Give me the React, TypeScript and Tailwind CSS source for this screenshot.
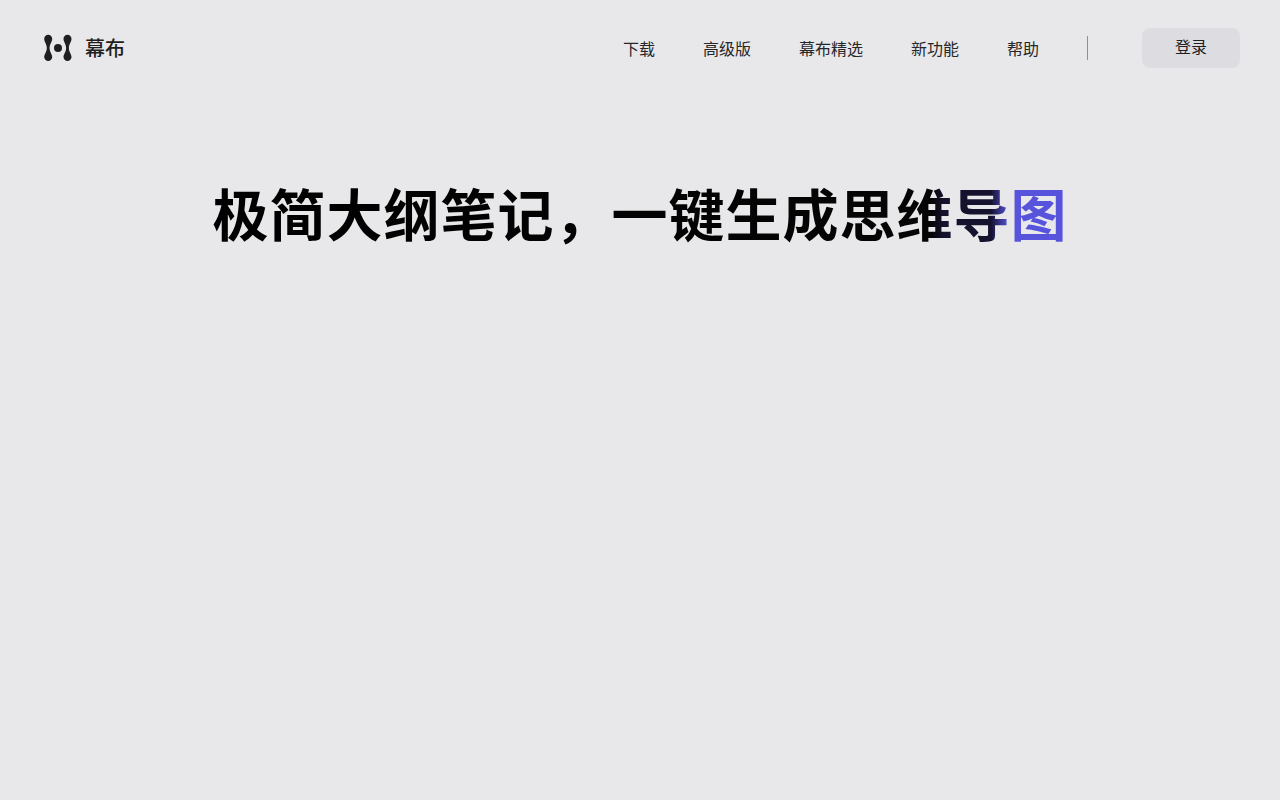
import React from 'react';

const navItems = ['下载', '高级版', '幕布精选', '新功能', '帮助'];
const headline = '极简大纲笔记\uFF0C一键生成思维导图';

const stick = 'M5.200 .8C7.400 .8 9.200 2.600 9.200 4.800C9.200 8 6.600 10 6.600 14C6.600 18 9.200 20 9.200 23C9.200 25.200 7.400 27 5.200 27C3 27 1.200 25.200 1.200 23C1.200 20 3.800 18 3.800 14C3.800 10 1.200 8 1.200 4.800C1.200 2.600 3 .8 5.200 .8Z';

const Logo = () => (
  <svg width="30" height="28" viewBox="0 0 30 28" fill="#1f1f21">
    <path d={stick} />
    <path d={stick} transform="translate(19.300 0)" />
    <circle cx="15" cy="14" r="4" />
  </svg>
);

export default function App() {
  return (
    <div className="min-h-[800px] bg-[#e8e8ea] font-['Noto_Sans_CJK_SC','Liberation_Sans',sans-serif]">
      <header className="flex h-24 items-center justify-between pl-[43px] pr-10">
        <div className="flex items-center gap-[12px]">
          <Logo />
          <span className="text-xl font-medium text-[#1f1f21]">幕布</span>
        </div>
        <nav className="flex items-center">
          <div className="flex items-center gap-12">
            {navItems.map(item => (
              <a key={item} className="text-base text-[#27272a]">{item}</a>
            ))}
          </div>
          <div className="ml-12 mr-[54px] h-6 w-px bg-[#8e8e93]"></div>
          <button className="h-10 w-[98px] rounded-lg bg-[#dddde1] pb-1 text-base text-[#1f1f21]">登录</button>
        </nav>
      </header>
      <h1 className="mt-20 text-center text-[56px] leading-[72px] font-bold tracking-[1px]">
        <span className="bg-[linear-gradient(90deg,#000000_0%,#050505_84%,#15122e_85.500%,#15122e_91%,#5753dc_93%,#5753dc_100%)] bg-clip-text text-transparent">
          {headline}
        </span>
      </h1>
    </div>
  );
}
